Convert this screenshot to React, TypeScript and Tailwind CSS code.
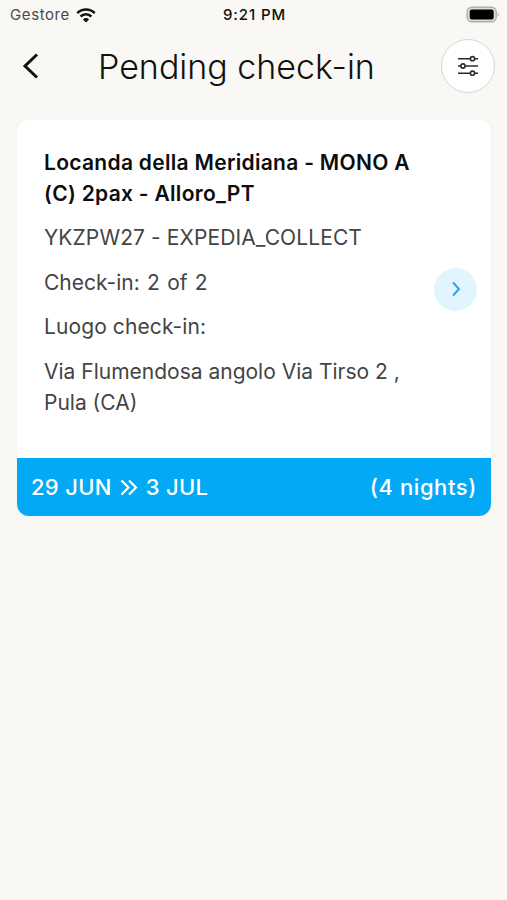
interface Booking {
  id: number;
  title: string[];
  code: string;
  checkIn: string;
  address: string[];
  from: string;
  to: string;
  nights: number;
}

const bookings: Booking[] = [
  {
    id: 1,
    title: ['Locanda della Meridiana - MONO A', '(C) 2pax - Alloro_PT'],
    code: 'YKZPW27 - EXPEDIA_COLLECT',
    checkIn: '2 of 2',
    address: ['Via Flumendosa angolo Via Tirso 2 ,', 'Pula (CA)'],
    from: '29 JUN',
    to: '3 JUL',
    nights: 4,
  },
];

function StatusBar() {
  return (
    <div className="flex h-[30px] items-center justify-between pl-[10px] pr-[8px] text-[15px]">
      <div className="flex w-[120px] items-center gap-[6px]">
        <span className="tracking-[0.6px] text-[#4a4a48]">Gestore</span>
        <svg width="20" height="15" viewBox="0 0 20 15" fill="none" stroke="#111" strokeWidth="2.5">
          <path d="M1.3 5.1a12.3 12.3 0 0 1 17.4 0" />
          <path d="M4.6 8.5a7.6 7.6 0 0 1 10.8 0" />
          <path d="M10 14.5 6.9 11.4a4.4 4.4 0 0 1 6.2 0z" fill="#111" stroke="none" />
        </svg>
      </div>
      <span className="font-medium tracking-[0.9px] text-[#111]">9:21 PM</span>
      <div className="flex w-[120px] justify-end">
        <svg width="33" height="17" viewBox="0 0 33 17" className="-mt-[2px]">
          <rect x="1.2" y="1.2" width="29" height="14.6" rx="4.5" fill="#dddddb" stroke="#b0b0ad" strokeWidth="1.4" />
          <rect x="3.7" y="3.6" width="24" height="9.8" rx="2" fill="#000" />
          <path d="M31.700 6.500v4c.7-.3 1.100-1.100 1.100-2s-.4-1.700-1.100-2z" fill="#b0b0ad" />
        </svg>
      </div>
    </div>
  );
}

function Header() {
  return (
    <header className="flex h-[72px] items-center pl-[22px] pr-[12px]">
      <button aria-label="Back" className="w-[54px]">
        <svg width="18" height="28" viewBox="0 0 18 28" fill="none" stroke="#111" strokeWidth="3">
          <path d="M15 2.500 3 14l12 11.500" />
        </svg>
      </button>
      <h1 className="flex-1 whitespace-nowrap pl-[22px] text-[34px] font-light text-[#111]">Pending check-in</h1>
      <button
        aria-label="Filters"
        className="flex size-[54px] items-center justify-center rounded-full border-[1.5px] border-[#d6d6d6] bg-white"
      >
        <svg width="22" height="22" viewBox="0 0 22 22" fill="white" stroke="#2b2b2b" strokeWidth="1.6">
          <path d="M1 3.700h20M1 11h20M1 18.200h20" />
          <circle cx="15.500" cy="3.700" r="2.100" />
          <circle cx="6" cy="11" r="2.100" />
          <circle cx="15.500" cy="18.200" r="2.100" />
        </svg>
      </button>
    </header>
  );
}

function BookingCard({ booking }: { booking: Booking }) {
  return (
    <article className="overflow-hidden rounded-[12px] bg-white shadow-[0_1px_6px_rgba(0,0,0,0.03)]">
      <div className="flex h-[338px] items-center justify-between pl-[27px] pr-[14px]">
        <div className="flex flex-col gap-[13.5px] whitespace-nowrap pb-[14px] text-[21px] leading-[31px] text-[#444]">
          <h2 className="font-semibold tracking-[0.3px] text-[#0d0d0d]">
            {booking.title.map((line) => (
              <span key={line} className="block">{line}</span>
            ))}
          </h2>
          <p className="tracking-[0.1px]">{booking.code}</p>
          <p className="[word-spacing:1.400px]">Check-in: {booking.checkIn}</p>
          <p className="tracking-[0.1px]">Luogo check-in:</p>
          <p>
            {booking.address.map((line) => (
              <span key={line} className="block">{line}</span>
            ))}
          </p>
        </div>
        <button aria-label="Open" className="flex size-[43px] shrink-0 items-center justify-center rounded-full bg-[#e2f4fd]">
          <svg width="10" height="16" viewBox="0 0 10 16" fill="none" stroke="#2aa5ee" strokeWidth="2">
            <path d="m2 1.500 6 6.500-6 6.500" />
          </svg>
        </button>
      </div>
      <footer className="flex h-[58px] items-center justify-between bg-[#03a9f4] px-[14px] text-[22px] font-medium text-white">
        <div className="flex items-center gap-[8px]">
          <span className="tracking-[0.3px]">{booking.from}</span>
          <svg width="18" height="17" viewBox="0 0 18 17" fill="none" stroke="white" strokeWidth="2.2">
            <path d="m1.500 1.500 7 7-7 7M9 1.500l7 7-7 7" />
          </svg>
          <span className="tracking-[0.3px]">{booking.to}</span>
        </div>
        <span className="tracking-[0.6px]">({booking.nights} nights)</span>
      </footer>
    </article>
  );
}

export default function App() {
  return (
    <div className="min-h-screen bg-[#f9f8f4] font-['Inter',sans-serif]">
      <StatusBar />
      <Header />
      <main className="flex flex-col gap-4 pl-[17px] pr-[16px] pt-[18px]">
        {bookings.map((booking) => (
          <BookingCard key={booking.id} booking={booking} />
        ))}
      </main>
    </div>
  );
}
